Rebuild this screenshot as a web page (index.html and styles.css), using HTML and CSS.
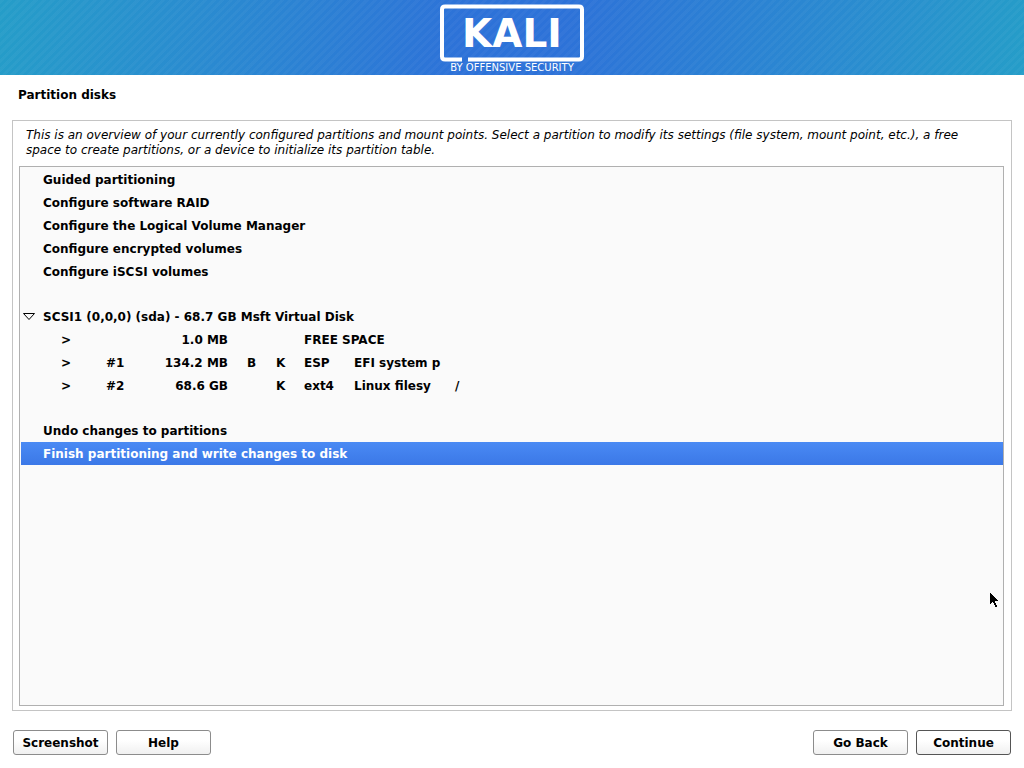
FILE: index.html
```html
<!DOCTYPE html>
<html lang="en">
<head>
<meta charset="utf-8">
<meta name="viewport" content="width=device-width, initial-scale=1">
<title>Partition disks</title>
<link rel="stylesheet" href="styles.css">
</head>
<body>
<header class="banner">
  <svg class="logo" width="146" height="75" viewBox="0 0 146 75" role="img" aria-label="Kali by Offensive Security">
    <path class="logo-frame" d="M23 59.500H6Q3 59.500 3 56.500V9.500Q3 6.500 6 6.500H140Q143 6.500 143 9.500V56.500Q143 59.500 140 59.500H29"/>
    <text class="logo-name" x="73" y="47">KALI</text>
    <text class="logo-tag" x="73" y="71">BY OFFENSIVE SECURITY</text>
  </svg>
</header>
<main class="installer">
  <h1 class="title">Partition disks</h1>
  <section class="frame">
    <p class="intro">This is an overview of your currently configured partitions and mount points. Select a partition to modify its settings (file system, mount point, etc.), a free space to create partitions, or a device to initialize its partition table.</p>
    <div class="tree">
      <button class="row" type="button">Guided partitioning</button>
      <button class="row" type="button">Configure software RAID</button>
      <button class="row" type="button">Configure the Logical Volume Manager</button>
      <button class="row" type="button">Configure encrypted volumes</button>
      <button class="row" type="button">Configure iSCSI volumes</button>
      <div class="spacer"></div>
      <button class="row device" type="button" aria-expanded="true">
        <svg class="expander" width="14" height="9" viewBox="0 0 14 9" aria-hidden="true"><path d="M1.500 1.500H12.500L7 7.500Z"/></svg>SCSI1 (0,0,0) (sda) - 68.7 GB Msft Virtual Disk</button>
      <table class="partitions">
        <colgroup><col class="c-mark"><col class="c-num"><col class="c-size"><col class="c-flag"><col class="c-keep"><col class="c-fs"><col class="c-name"><col></colgroup>
        <tbody>
          <tr><td>&gt;</td><td></td><td class="size">1.0 MB</td><td></td><td></td><td colspan="2">FREE SPACE</td><td></td></tr>
          <tr><td>&gt;</td><td>#1</td><td class="size">134.2 MB</td><td>B</td><td>K</td><td>ESP</td><td>EFI system p</td><td></td></tr>
          <tr><td>&gt;</td><td>#2</td><td class="size">68.6 GB</td><td></td><td>K</td><td>ext4</td><td>Linux filesy</td><td>/</td></tr>
        </tbody>
      </table>
      <div class="spacer"></div>
      <button class="row" type="button">Undo changes to partitions</button>
      <button class="row selected" type="button" aria-pressed="true">Finish partitioning and write changes to disk</button>
    </div>
  </section>
  <footer class="actions">
    <button class="btn" type="button">Screenshot</button>
    <button class="btn" type="button">Help</button>
    <button class="btn push" type="button">Go Back</button>
    <button class="btn default" type="button">Continue</button>
  </footer>
</main>
<svg class="pointer" width="9" height="16" viewBox="0 0 9 16" shape-rendering="crispEdges" aria-hidden="true"><path d="M0 0H1V1H2V2H3V3H4V4H5V5H6V6H7V7H8V8H5V10H6V12H7V14H5V12H4V10H3V9H2V10H1V11H0Z"/></svg>
</body>
</html>
```
FILE: styles.css
```css
* {
  box-sizing: border-box;
}

body {
  margin: 0;
  min-height: 100vh;
  display: flex;
  flex-direction: column;
  background: #fff;
  color: #000;
  font: bold 12px/21px "DejaVu Sans", sans-serif;
}

.banner {
  display: flex;
  justify-content: center;
  height: 75px;
  background:
    repeating-linear-gradient(135deg, rgba(255, 255, 255, 0.03) 0 3px, transparent 3px 6px),
    linear-gradient(100deg, #259dc8 0%, #2a8bd0 20%, #2d72d8 45%, #2d72d8 55%, #2a8bd0 82%, #259dc8 100%);
}

.logo-frame {
  fill: none;
  stroke: #fff;
  stroke-width: 4;
}

.logo-name,
.logo-tag {
  fill: #fff;
  text-anchor: middle;
}

.logo-name {
  font: bold 39px "DejaVu Sans", sans-serif;
}

.logo-tag {
  font: 10px "DejaVu Sans", sans-serif;
}

.installer {
  flex: 1;
  display: flex;
  flex-direction: column;
  padding: 10px 12px 13px;
}

.title {
  margin: 0 6px 14px;
  font-size: 12px;
}

.frame {
  flex: 1;
  display: flex;
  flex-direction: column;
  padding: 7px 7px 4px 6px;
  border: 1px solid #c4c4c4;
}

.intro {
  margin: 0 7px 8px;
  font-weight: normal;
  font-style: oblique;
  line-height: 15px;
}

.tree {
  flex: 1;
  padding: 1px 0 0 1px;
  border: 1px solid #b0b0b0;
  background: #fafafa;
}

.row {
  display: block;
  position: relative;
  width: 100%;
  height: 23px;
  padding: 2px 22px 0;
  border: 0;
  background: none;
  color: inherit;
  font: inherit;
  text-align: left;
}

.selected {
  background: linear-gradient(#4a8af4, #3b78e7);
  color: #fff;
}

.spacer {
  height: 22px;
}

.expander {
  position: absolute;
  left: 1px;
  top: 7px;
  fill: none;
  stroke: #000;
}

.partitions {
  width: 100%;
  padding-left: 40px;
  border-spacing: 0;
  table-layout: fixed;
}

.partitions td {
  height: 23px;
  padding: 2px 0 0;
  white-space: nowrap;
}

.partitions .size {
  padding-right: 19px;
  text-align: right;
}

.c-mark { width: 45px; }
.c-num { width: 46px; }
.c-size { width: 95px; }
.c-flag { width: 29px; }
.c-keep { width: 28px; }
.c-fs { width: 50px; }
.c-name { width: 101px; }

.actions {
  display: flex;
  gap: 8px;
  padding: 19px 1px 0;
}

.btn {
  width: 95px;
  height: 25px;
  padding: 2px 0 0;
  border: 1px solid #8c8c8c;
  border-radius: 3px;
  background: linear-gradient(#fff 40%, #f0f0f0);
  color: inherit;
  font: inherit;
}

.default {
  border-color: #555;
}

.push {
  margin-left: auto;
}

.pointer {
  position: absolute;
  left: 990px;
  top: 593px;
}
```
